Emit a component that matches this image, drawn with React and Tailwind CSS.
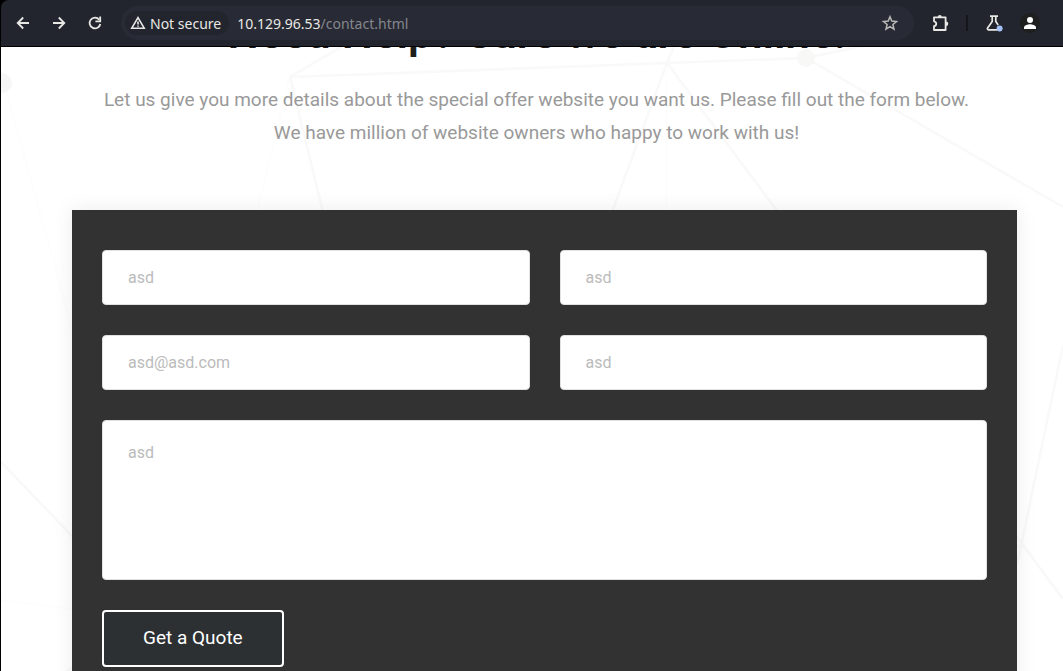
import React from 'react';

const field =
  'block w-full rounded-[4px] border border-[#e1e1e1] bg-white px-[25px] font-[Roboto,sans-serif] text-[16px] text-[#bbbbbb] outline-none';

function IconButton({ label, children, className = '' }) {
  return (
    <button type="button" aria-label={label} className={'flex size-[28px] shrink-0 items-center justify-center ' + className}>
      {children}
    </button>
  );
}

function Toolbar() {
  return (
    <header className="relative z-10 flex h-[47px] shrink-0 items-center rounded-tl-[8px] border-b border-black bg-[#22252e] pl-[8px] pr-[19px] font-['Noto_Sans',sans-serif] text-[#e8e8e4]">
      <nav className="flex gap-[8px]" aria-label="History">
        <IconButton label="Back">
          <svg viewBox="0 0 16 16" className="size-[16px]" fill="none" stroke="currentColor" strokeWidth="1.8">
            <path d="M14 8H3M8.2 2.5 2.7 8l5.5 5.5" />
          </svg>
        </IconButton>
        <IconButton label="Forward">
          <svg viewBox="0 0 16 16" className="size-[16px]" fill="none" stroke="currentColor" strokeWidth="1.8">
            <path d="M2 8h11M7.8 2.5 13.3 8l-5.5 5.5" />
          </svg>
        </IconButton>
        <IconButton label="Reload">
          <svg viewBox="0 0 16 16" className="size-[16px]" fill="none" stroke="currentColor" strokeWidth="1.8">
            <path d="M12.2 4.6A5.4 5.4 0 1 0 13.3 9" />
            <path d="M13.2 1.6v4.8H8.4" />
          </svg>
        </IconButton>
      </nav>
      <div className="ml-[12px] flex h-[34px] min-w-0 flex-1 items-center rounded-full bg-[#282a35] pl-[4px] pr-[10px]">
        <button type="button" className="flex h-[24px] shrink-0 items-center gap-[4px] rounded-full bg-[#22252e] pl-[5px] pr-[8px] text-[14px]">
          <svg viewBox="0 0 16 16" className="size-[16px]" fill="none" stroke="currentColor" strokeWidth="1.6">
            <path d="M8 2.6 14.2 13.2H1.8Z" />
            <path d="M8 6.4v3.2M8 10.4v1.4" />
          </svg>
          Not secure
        </button>
        <div className="ml-[8px] flex min-w-0 flex-1 text-[14px]">
          <span>10.129.96.53</span>
          <span className="text-[#85878d]">/contact.html</span>
        </div>
        <IconButton label="Bookmark this page" className="text-[#b9b9b7]">
          <svg viewBox="0 0 18 18" className="size-[18px]" fill="none" stroke="currentColor" strokeWidth="1.5">
            <path d="m9 2.7 1.8 4.4 4.7.4-3.6 3 1.1 4.7-4-2.5-4 2.5 1.1-4.7-3.6-3 4.7-.4Z" />
          </svg>
        </IconButton>
      </div>
      <div className="ml-[12px] flex items-center">
        <IconButton label="Extensions">
          <svg viewBox="0 0 20 20" className="size-[20px]">
            <path
              d="M4 4.300H15.600V17H4V13.200C7 12.600 7 8.900 4 8.300Z"
              fill="none"
              stroke="currentColor"
              strokeWidth="1.8"
              strokeLinejoin="round"
            />
            <path d="M7.800 3.900a2 2 0 0 1 4 0ZM16 8.400a2.300 2.300 0 0 1 0 4.600Z" fill="currentColor" />
          </svg>
        </IconButton>
        <span className="ml-[12px] h-[16px] w-[2px] bg-[#14161c]" />
        <IconButton label="Labs" className="ml-[12px]">
          <svg viewBox="0 0 20 20" className="size-[20px]">
            <path d="M6 3.2h8M8.2 3.2v5.4L3.6 15c-.5.8-.1 1.8.9 1.8h9M11.8 3.2v5.4l2.4 3.4" fill="none" stroke="currentColor" strokeWidth="1.7" />
            <circle cx="15.6" cy="15.4" r="3" fill="#a4c2f7" />
          </svg>
        </IconButton>
        <IconButton label="Profile" className="ml-[8px]">
          <svg viewBox="0 0 20 20" className="size-[20px]">
            <circle cx="10" cy="10" r="10" fill="#1f1f1f" />
            <circle cx="10" cy="7" r="3" fill="#fff" />
            <path d="M4 16v-1.600c0-2 4-3.200 6-3.200s6 1.200 6 3.200V16Z" fill="#fff" />
          </svg>
        </IconButton>
      </div>
    </header>
  );
}

function Network() {
  return (
    <svg viewBox="0 0 1062 624" preserveAspectRatio="xMidYMin slice" aria-hidden="true" className="absolute inset-0 -z-10 size-full">
      <g fill="none" stroke="#f9f9f9" strokeWidth="2.600">
        <path d="M342 -1 289 30 322 165M289 30 666 16 805 11 862 -1M805 11 1062 160" />
        <path d="M673 -1 666 16 611 165M666 16 777 165" />
        <path d="M0 415 72 490M1062 298 1016 518M1016 490l46 62M1016 500l6-4M64 625l8-5" />
      </g>
      <g fill="none" stroke="#fdfdfd" strokeWidth="2">
        <path d="M288 32 256 165M665 20v145M4 40 72 285M0 553l72 9" />
      </g>
      <circle cx="805" cy="11" r="9" fill="#f8f8f7" />
      <circle cx="1" cy="36" r="10" fill="#f6f6f6" />
    </svg>
  );
}

export default function App() {
  return (
    <div className="flex h-screen flex-col overflow-hidden border-l border-black bg-black">
      <Toolbar />
      <main className="relative isolate min-h-0 flex-1 overflow-hidden bg-white pl-[71px] pr-[46px] font-[Roboto,sans-serif]">
        <Network />
        <section className="-mt-[39px] pr-4 text-center">
          <h1 className="whitespace-nowrap text-[44px] font-semibold leading-[50px] text-[#1f1f1f]">Need Help? Sure we are Online!</h1>
          <p className="-mx-4 mt-[25px] text-[19px] leading-[33px] text-[#999999]">
            Let us give you more details about the special offer website you want us. Please fill out the form below.
            <br />
            We have million of website owners who happy to work with us!
          </p>
        </section>
        <form
          className="mt-[61px] grid grid-cols-2 gap-[30px] bg-[#323232] px-[30px] pb-[40px] pt-[40px] shadow-[0_0_20px_rgba(0,0,0,0.08)]"
          onSubmit={(e) => e.preventDefault()}
        >
          <input aria-label="First name" defaultValue="asd" className={field + ' h-[55px]'} />
          <input aria-label="Last name" defaultValue="asd" className={field + ' h-[55px]'} />
          <input aria-label="Email" type="email" defaultValue="asd@asd.com" className={field + ' h-[55px]'} />
          <input aria-label="Subject" defaultValue="asd" className={field + ' h-[55px]'} />
          <textarea aria-label="Message" defaultValue="asd" className={field + ' col-span-2 h-[160px] resize-none pt-[20px] leading-[24px]'} />
          <button
            type="submit"
            className="col-span-2 h-[57px] justify-self-start rounded-[4px] border-2 border-white bg-[#2d3033] px-[39px] text-[19px] text-white"
          >
            Get a Quote
          </button>
        </form>
      </main>
    </div>
  );
}
